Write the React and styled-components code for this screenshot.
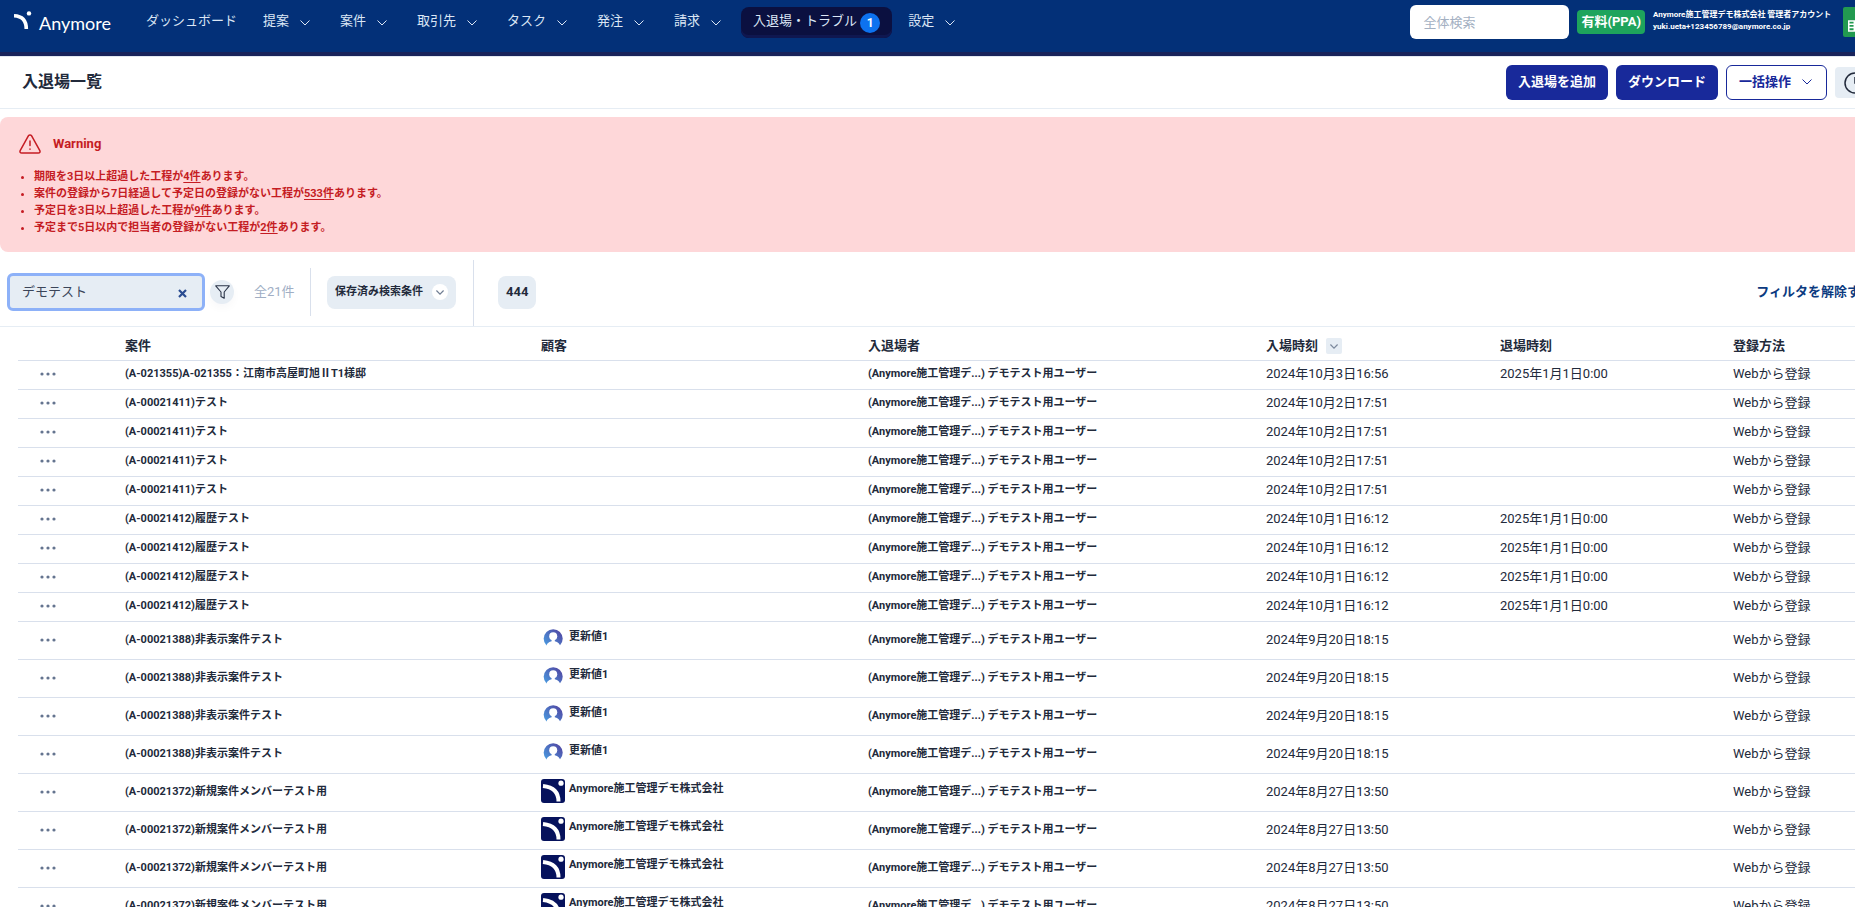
import React from 'react';
import styled, { createGlobalStyle, css } from 'styled-components';

const GlobalStyle = createGlobalStyle`
  *, *::before, *::after { box-sizing: border-box; }
  html, body { margin: 0; padding: 0; }
  body {
    background: #fff;
    color: #222a3b;
    font-family: Roboto, 'Noto Sans CJK JP', sans-serif;
    font-size: 13px;
    line-height: 20px;
    overflow: hidden;
  }
  button, input { font: inherit; color: inherit; margin: 0; }
  button { border: 0; background: none; padding: 0; cursor: pointer; }
  a { color: inherit; text-decoration: none; }
`;

const Viewport = styled.div`
  height: 100vh;
  overflow: hidden;
`;

const Page = styled.div`
  width: calc(100% + 30px);
`;

/* ---------- top bar ---------- */

const TopBar = styled.header`
  display: flex;
  align-items: flex-start;
  height: 56px;
  padding: 0 12px 0 14px;
  background: #033078;
  border-bottom: 4px solid #19235b;
  color: #dbe6f5;
`;

const Brand = styled.a`
  display: flex;
  gap: 7px;
  width: 132px;
  padding-top: 11px;
  color: #fff;
`;

const Wordmark = styled.span`
  padding-top: 2px;
  font-family: Lato, sans-serif;
  font-size: 18px;
  font-weight: 400;
`;

const Nav = styled.nav`
  display: flex;
  align-items: center;
  flex: 1;
  height: 31px;
  margin-top: 7px;
`;

const NavItem = styled.button`
  display: flex;
  align-items: center;
  gap: 11px;
  height: 31px;
  margin-right: ${(p) => (p.$plain ? 26 : 30)}px;
  padding-bottom: 3px;
  white-space: nowrap;
  ${(p) =>
    p.$active &&
    css`
      gap: 3px;
      margin: 0 16px 0 -10px;
      padding: 0 12px 3px;
      border-radius: 8px;
      background: #0b1040;
      box-shadow: inset 0 -3px 0 #0f1750;
    `}
`;

const NavChevron = styled.span`
  display: flex;
  padding-top: 4px;
`;

const CountBadge = styled.span`
  width: 20px;
  height: 20px;
  margin-top: 3px;
  border-radius: 50%;
  background: #0d72ef;
  color: #fff;
  font-size: 12px;
  font-weight: 700;
  text-align: center;
`;

const Account = styled.div`
  display: flex;
  align-items: flex-start;
  gap: 8px;
`;

const GlobalSearch = styled.input`
  width: 159px;
  height: 34px;
  margin-top: 5px;
  padding: 0 13px;
  border: 0;
  border-radius: 6px;
  background: #fff;
  color: #222a3b;
  &::placeholder { color: #a3b0c2; opacity: 1; }
`;

const PlanBadge = styled.span`
  height: 24px;
  margin-top: 10px;
  padding: 2px 4px;
  border-radius: 4px;
  background: #1ea45c;
  color: #fff;
  font-weight: 700;
  white-space: nowrap;
`;

const UserInfo = styled.div`
  width: 182px;
  padding-top: 9px;
  color: #fff;
  font-size: 8px;
  font-weight: 700;
  line-height: 12px;
  white-space: nowrap;
`;

const SheetButton = styled.button`
  display: flex;
  align-items: center;
  justify-content: center;
  width: 30px;
  height: 30px;
  margin-top: 7px;
  border-radius: 2px;
  background: #229a50;
  color: #fff;
`;

/* ---------- title bar ---------- */

const TitleBar = styled.div`
  display: flex;
  align-items: center;
  gap: 8px;
  height: 53px;
  padding: 0 10px 0 22px;
  border-top: 1px solid #e2e8f0;
  border-bottom: 1px solid #e6edf4;
`;

const Title = styled.h1`
  flex: 1;
  margin: 0;
  padding-bottom: 2px;
  font-size: 16px;
  font-weight: 700;
`;

const ActionButton = styled.button`
  display: flex;
  align-items: center;
  gap: 11px;
  height: 35px;
  padding: 0 12px 2px;
  border-radius: 6px;
  background: #18299a;
  color: #fff;
  font-weight: 700;
  white-space: nowrap;
  ${(p) =>
    p.$outline &&
    css`
      padding: 0 14px 2px 12px;
      border: 1px solid #18299a;
      background: #fff;
      color: #18299a;
    `}
`;

const HistoryButton = styled.button`
  display: flex;
  align-items: center;
  justify-content: center;
  width: 40px;
  height: 31px;
  border-radius: 4px;
  background: #e6edf4;
`;

/* ---------- warning ---------- */

const Warning = styled.section`
  height: 135px;
  margin-top: 8px;
  padding: 16px 19px;
  border-radius: 8px;
  background: #fed7d9;
  color: #c51c23;
`;

const WarningHead = styled.h2`
  display: flex;
  align-items: center;
  gap: 12px;
  height: 22px;
  margin: 0 0 13px;
  font-size: 13px;
  font-weight: 700;
`;

const WarningList = styled.ul`
  margin: 0;
  padding: 0 0 0 15px;
  font-size: 11px;
  font-weight: 700;
  line-height: 17px;
`;

const CountLink = styled.a`
  text-decoration: underline;
  text-underline-offset: 2px;
`;

/* ---------- filter bar ---------- */

const FilterBar = styled.div`
  display: flex;
  align-items: center;
  height: 75px;
  padding: 8px 0 0 7px;
  border-bottom: 1px solid #e6edf4;
`;

const SearchBox = styled.label`
  display: flex;
  align-items: center;
  width: 198px;
  height: 38px;
  margin-bottom: 2px;
  padding: 0 15px 0 12px;
  border: 3px solid #8db1f8;
  border-radius: 6px;
  background: #e6edf4;
`;

const SearchInput = styled.input`
  flex: 1;
  min-width: 0;
  padding: 0;
  border: 0;
  outline: 0;
  background: none;
  color: #3b4559;
`;

const ClearButton = styled.button`
  display: flex;
  padding-top: 3px;
  color: #2a4c91;
`;

const FunnelButton = styled.button`
  display: flex;
  align-items: center;
  justify-content: center;
  width: 24px;
  height: 24px;
  margin: 0 20px 2px 5px;
  border-radius: 50%;
  background: #e6edf4;
  box-shadow: 0 4px 8px rgba(30, 37, 54, 0.03);
`;

const Total = styled.span`
  width: 56px;
  margin-bottom: 2px;
  color: #a0aec4;
`;

const ShortDivider = styled.span`
  width: 1px;
  height: 48px;
  margin: 0 16px 2px 0;
  background: #d9e0ec;
`;

const TallDivider = styled(ShortDivider)`
  height: 66px;
  margin: 0 24px 0 17px;
`;

const Chip = styled.button`
  display: flex;
  align-items: center;
  gap: 9px;
  height: 33px;
  margin-bottom: 2px;
  padding: 0 8px;
  border-radius: 8px;
  background: #e6edf4;
  font-size: ${(p) => (p.$large ? 13 : 11)}px;
  font-weight: 700;
  white-space: nowrap;
`;

const ChipChevron = styled.span`
  display: flex;
  align-items: center;
  justify-content: center;
  width: 16px;
  height: 16px;
  border-radius: 50%;
  background: #fff;
  color: #6f7d92;
`;

const ClearFilter = styled.button`
  margin: 0 12px 2px auto;
  color: #0b3a80;
  font-weight: 700;
  white-space: nowrap;
`;

/* ---------- table ---------- */

const TableArea = styled.main`
  padding: 7px 0 0 18px;
`;

const Table = styled.table`
  width: 100%;
  border-collapse: separate;
  border-spacing: 0;
  table-layout: fixed;
`;

const HeadCell = styled.th`
  width: ${(p) => p.$width}px;
  height: 27px;
  padding: 0 0 2px;
  border-bottom: 1px solid #d9e0ec;
  font-weight: 700;
  text-align: left;
  white-space: nowrap;
`;

const HeadLabel = styled.span`
  display: flex;
  align-items: center;
  gap: 8px;
  height: 24px;
`;

const SortButton = styled.button`
  display: flex;
  align-items: center;
  justify-content: center;
  width: 16px;
  height: 16px;
  border-radius: 2px;
  background: #e6edf4;
  color: #7b889c;
`;

const Row = styled.tr`
  height: ${(p) => p.$height}px;
`;

const Cell = styled.td`
  padding: 0 0 2px;
  border-bottom: 1px solid #d9e0ec;
  font-size: ${(p) => (p.$strong ? 11 : 13)}px;
  font-weight: ${(p) => (p.$strong ? 700 : 400)};
  line-height: 20px;
  white-space: nowrap;
`;

const MenuButton = styled.button`
  display: flex;
  margin-left: 22px;
  color: #64748f;
`;

const Customer = styled.span`
  display: flex;
  align-items: center;
  gap: 4px;
  padding-bottom: 2px;
`;

const CustomerName = styled.span`
  padding-bottom: 4px;
`;

/* ---------- drawings ---------- */

const Chevron = ({ width = 10, stroke = 1 }) => (
  <svg width={width} height={width / 2 + 1} viewBox="0 0 10 6" fill="none" stroke="currentColor" strokeWidth={stroke}>
    <path d="M0.5 0.5 5 5 9.5 0.5" />
  </svg>
);

const LogoMark = () => (
  <svg width="18" height="19" viewBox="0 0 18 19" fill="none">
    <path d="M0 4.7C8 5 12.3 9.5 12.3 18" stroke="#fff" strokeWidth="3.6" />
    <circle cx="15" cy="2.4" r="2.2" fill="#fff" />
  </svg>
);

const Triangle = () => (
  <svg width="22" height="20" viewBox="0 0 22 20" fill="none" stroke="currentColor" strokeWidth="1.5" strokeLinecap="round" strokeLinejoin="round">
    <path d="M9.5 1.7 1.3 16.4C.5 17.9 1.2 19 2.8 19H19.2C20.8 19 21.5 17.9 20.7 16.4L12.5 1.7C11.8.6 10.2.6 9.5 1.7Z" />
    <path d="M11 7V11.5M11 15V15.2" />
  </svg>
);

const Funnel = () => (
  <svg width="15" height="14" viewBox="0 0 15 14" fill="none" stroke="#2b3448" strokeWidth="1.1" strokeLinejoin="round">
    <path d="M0.7 0.8H14.3L9.2 7V13.2L6 11.5V7Z" />
  </svg>
);

const Cross = () => (
  <svg width="9" height="9" viewBox="0 0 9 9" stroke="currentColor" strokeWidth="2.2">
    <path d="M1 1 8 8M8 1 1 8" />
  </svg>
);

const Dots = () => (
  <svg width="16" height="4" viewBox="0 0 16 4" fill="currentColor">
    <circle cx="2" cy="2" r="1.6" />
    <circle cx="8" cy="2" r="1.6" />
    <circle cx="14" cy="2" r="1.6" />
  </svg>
);

const Sheet = () => (
  <svg width="20" height="20" viewBox="0 0 20 20" fill="none" stroke="currentColor" strokeWidth="1.5">
    <path d="M0.75 9H12V19H0.75ZM0.75 12.3H12M0.75 15.6H12M6.3 9V19M8 3H19V16H14" />
  </svg>
);

const Clock = () => (
  <svg width="22" height="22" viewBox="0 0 22 22" fill="none" stroke="#222a3b" strokeWidth="1.5">
    <circle cx="11" cy="11" r="10" />
    <path d="M11 5V11H15" />
  </svg>
);

const PersonMark = () => (
  <svg width="24" height="24" viewBox="0 0 24 24">
    <defs>
      <linearGradient id="person" x1="0" y1="1" x2="1" y2="0">
        <stop offset="0.1" stopColor="#4a9be0" />
        <stop offset="0.9" stopColor="#5148a4" />
      </linearGradient>
    </defs>
    <circle cx="12.2" cy="11.7" r="9.5" fill="url(#person)" />
    <circle cx="12.2" cy="9.3" r="4" fill="#fff" />
    <path d="M10.6 12H13.8V14.2C17 14.8 19 17 19.6 19.8V24H4.8V19.8C5.4 17 7.4 14.8 10.6 14.2Z" fill="#fff" />
  </svg>
);

const CompanyMark = () => (
  <svg width="24" height="24" viewBox="0 0 24 24">
    <rect width="24" height="24" rx="3" fill="#06125c" />
    <path d="M2 7C12 8 17.5 13.5 17.5 22.5" fill="none" stroke="#fff" strokeWidth="4" />
    <circle cx="20" cy="4.2" r="2.6" fill="#fff" />
  </svg>
);

/* ---------- data ---------- */

const navItems = [
  { label: 'ダッシュボード', plain: true },
  { label: '提案' },
  { label: '案件' },
  { label: '取引先' },
  { label: 'タスク' },
  { label: '発注' },
  { label: '請求' },
  { label: '入退場・トラブル', count: 1 },
  { label: '設定' },
];

const warnings = [
  ['期限を3日以上超過した工程が', '4件'],
  ['案件の登録から7日経過して予定日の登録がない工程が', '533件'],
  ['予定日を3日以上超過した工程が', '9件'],
  ['予定まで5日以内で担当者の登録がない工程が', '2件'],
];

const columns = [
  { label: '', width: 107 },
  { label: '案件', width: 416 },
  { label: '顧客', width: 327 },
  { label: '入退場者', width: 398 },
  { label: '入場時刻', width: 234, sortable: true },
  { label: '退場時刻', width: 233 },
  { label: '登録方法', width: 152 },
];

const repeat = (count, row) => Array.from({ length: count }, () => row);

const rows = [
  { project: '(A-021355)A-021355：江南市高屋町旭ⅡT1様邸', entered: '2024年10月3日16:56', left: '2025年1月1日0:00' },
  ...repeat(4, { project: '(A-00021411)テスト', entered: '2024年10月2日17:51' }),
  ...repeat(4, { project: '(A-00021412)履歴テスト', entered: '2024年10月1日16:12', left: '2025年1月1日0:00' }),
  ...repeat(4, { project: '(A-00021388)非表示案件テスト', entered: '2024年9月20日18:15', customer: '更新値1', kind: 'person' }),
  ...repeat(4, {
    project: '(A-00021372)新規案件メンバーテスト用',
    entered: '2024年8月27日13:50',
    customer: 'Anymore施工管理デモ株式会社',
    kind: 'company',
  }),
];

const rowHeights = { person: 38, company: 38 };

export default function App() {
  return (
    <Viewport>
      <GlobalStyle />
      <Page>
        <TopBar>
          <Brand href="#">
            <LogoMark />
            <Wordmark>Anymore</Wordmark>
          </Brand>
          <Nav>
            {navItems.map((item) => (
              <NavItem key={item.label} type="button" $plain={item.plain} $active={Boolean(item.count)}>
                {item.label}
                {item.count && <CountBadge>{item.count}</CountBadge>}
                {!item.count && !item.plain && (
                  <NavChevron>
                    <Chevron />
                  </NavChevron>
                )}
              </NavItem>
            ))}
          </Nav>
          <Account>
            <GlobalSearch type="search" placeholder="全体検索" aria-label="全体検索" />
            <PlanBadge>有料(PPA)</PlanBadge>
            <UserInfo>
              <div>Anymore施工管理デモ株式会社 管理者アカウント</div>
              <div>yuki.ueta+123456789@anymore.co.jp</div>
            </UserInfo>
            <SheetButton type="button" aria-label="スプレッドシート">
              <Sheet />
            </SheetButton>
          </Account>
        </TopBar>

        <TitleBar>
          <Title>入退場一覧</Title>
          <ActionButton type="button">入退場を追加</ActionButton>
          <ActionButton type="button">ダウンロード</ActionButton>
          <ActionButton type="button" $outline>
            一括操作
            <Chevron />
          </ActionButton>
          <HistoryButton type="button" aria-label="履歴">
            <Clock />
          </HistoryButton>
        </TitleBar>

        <Warning>
          <WarningHead>
            <Triangle />
            Warning
          </WarningHead>
          <WarningList>
            {warnings.map(([text, count]) => (
              <li key={text}>
                {text}
                <CountLink href="#">{count}</CountLink>
                あります。
              </li>
            ))}
          </WarningList>
        </Warning>

        <FilterBar>
          <SearchBox>
            <SearchInput type="text" defaultValue="デモテスト" aria-label="検索" />
            <ClearButton type="button" aria-label="クリア">
              <Cross />
            </ClearButton>
          </SearchBox>
          <FunnelButton type="button" aria-label="絞り込み">
            <Funnel />
          </FunnelButton>
          <Total>全21件</Total>
          <ShortDivider />
          <Chip type="button">
            保存済み検索条件
            <ChipChevron>
              <Chevron width={8} stroke={1.5} />
            </ChipChevron>
          </Chip>
          <TallDivider />
          <Chip type="button" $large>
            444
          </Chip>
          <ClearFilter type="button">フィルタを解除する</ClearFilter>
        </FilterBar>

        <TableArea>
          <Table>
            <thead>
              <tr>
                {columns.map((column) => (
                  <HeadCell key={column.label} scope="col" $width={column.width}>
                    <HeadLabel>
                      {column.label}
                      {column.sortable && (
                        <SortButton type="button" aria-label="並び替え">
                          <Chevron width={8} stroke={1.5} />
                        </SortButton>
                      )}
                    </HeadLabel>
                  </HeadCell>
                ))}
              </tr>
            </thead>
            <tbody>
              {rows.map((row, index) => (
                <Row key={index} $height={rowHeights[row.kind] || 29}>
                  <Cell>
                    <MenuButton type="button" aria-label="メニュー">
                      <Dots />
                    </MenuButton>
                  </Cell>
                  <Cell $strong>{row.project}</Cell>
                  <Cell $strong>
                    {row.customer && (
                      <Customer>
                        {row.kind === 'person' ? <PersonMark /> : <CompanyMark />}
                        <CustomerName>{row.customer}</CustomerName>
                      </Customer>
                    )}
                  </Cell>
                  <Cell $strong>(Anymore施工管理デ...) デモテスト用ユーザー</Cell>
                  <Cell>{row.entered}</Cell>
                  <Cell>{row.left}</Cell>
                  <Cell>Webから登録</Cell>
                </Row>
              ))}
            </tbody>
          </Table>
        </TableArea>
      </Page>
    </Viewport>
  );
}
